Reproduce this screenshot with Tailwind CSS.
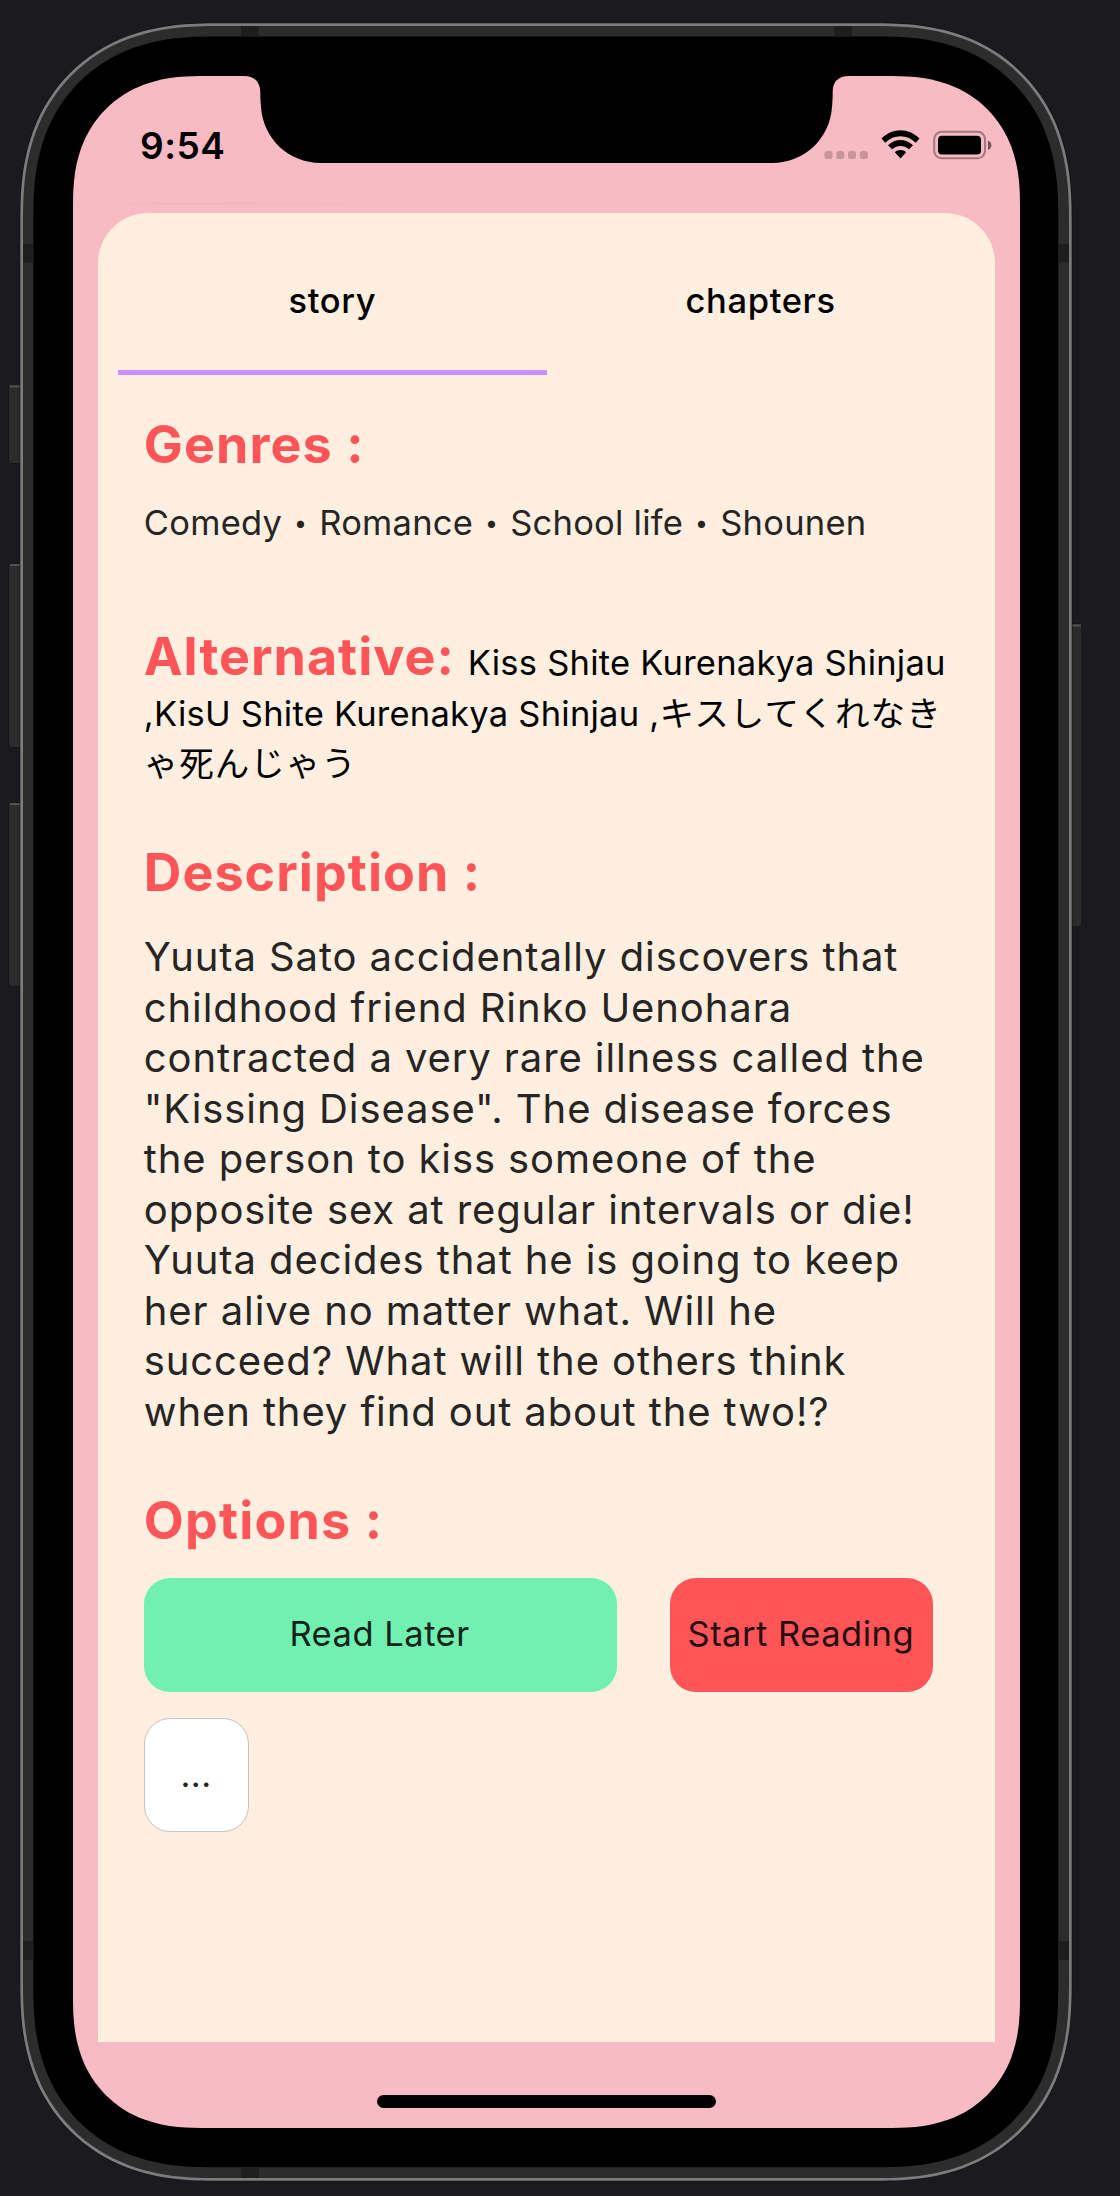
<!DOCTYPE html>
<html lang="en">
<head>
<meta charset="utf-8">
<title>Story details</title>
<script src="https://cdn.jsdelivr.net/npm/@tailwindcss/browser@4"></script>
</head>
<body class="bg-[#1b1a1e]">
<div class="relative w-[1120px] h-[2196px] overflow-hidden font-['Inter','Noto_Sans_CJK_JP',sans-serif] text-[#272523]">

  <!-- Device shell -->
  <svg class="absolute inset-0" width="1120" height="2196" viewBox="0 0 1120 2196" fill="none">
    <defs>
      <linearGradient id="hair" x1="110" x2="420" y1="0" y2="0" gradientUnits="userSpaceOnUse">
        <stop offset="0" stop-color="#e9adb6" stop-opacity="0"/><stop offset=".2" stop-color="#e9adb6" stop-opacity=".6"/><stop offset="1" stop-color="#e9adb6" stop-opacity="0"/>
      </linearGradient>
    </defs>
    <!-- Side buttons -->
    <g fill="#2b2b2b" stroke="#151417" stroke-width="1">
      <rect x="8.500" y="379.500" width="20" height="84" rx="3"/>
      <rect x="8.500" y="563.500" width="20" height="184" rx="3"/>
      <rect x="8.500" y="802.500" width="20" height="184" rx="3"/>
      <rect x="1062" y="623.500" width="20" height="303" rx="3"/>
    </g>
    <path d="M10 386.500H21M10 565H21M10 804H21M1071 625.500H1081" stroke="#525252" stroke-width="2"/>
    <path d="M8 379H20V385H8Z" fill="#1b1a1e"/>
    <g id="shell"></g>
    <!-- Antenna bands -->
    <g fill="#1e1e1e">
      <rect x="241" y="26" width="18" height="10.500"/><rect x="834" y="26" width="18" height="10.500"/>
      <rect x="241" y="2167.300" width="18" height="10.700"/>
      <rect x="23" y="244" width="10.300" height="18.500"/><rect x="1058.300" y="244" width="10.700" height="18.500"/>
      <rect x="23" y="1941" width="10.300" height="19"/><rect x="1058.300" y="1941" width="10.700" height="19"/>
    </g>
    <g id="screen"></g>
    <!-- Notch -->
    <path d="M244 75H849V76C838 76 832.700 82 832.700 92C832.700 98 832.500 101 832 107C830 138 805 163 772 163H321C288 163 263 138 261 107C260.500 101 260.300 98 260.300 92C260.300 82 254 76 244 76Z" fill="#000"/>
    <path d="M110 203.500H420" stroke="url(#hair)" stroke-width="1.500"/>
  </svg>
  <script>
    // Rounded rectangle with continuous corners.
    function squircle(x, y, w, h, r) {
      const k = [1.2, 1.02, 0.84, 0.63149, 0.37282, 0.16906, 0.07491].map(v => v * r);
      const [a, b, c, d, e, f, g] = k;
      const corner = (sx, sy, ox, oy, flip) => {
        const p = (u, v) => (flip ? [ox + sx * v, oy + sy * u] : [ox + sx * u, oy + sy * v]).join(' ');
        return `L${p(0, a)}C${p(0, b)} ${p(0, c)} ${p(g, d)}C${p(f, e)} ${p(e, f)} ${p(d, g)}C${p(c, 0)} ${p(b, 0)} ${p(a, 0)}`;
      };
      return 'M' + x + ' ' + (y + a) + corner(1, 1, x, y) + corner(-1, 1, x + w, y, true) +
        corner(-1, -1, x + w, y + h) + corner(1, -1, x, y + h, true) + 'Z';
    }
    const path = (x1, y1, x2, y2, r, fill) => `<path d="${squircle(x1, y1, x2 - x1, y2 - y1, r)}" fill="${fill}"/>`;
    document.getElementById('shell').innerHTML =
      path(19.5, 22.5, 1072.5, 2181.5, 172, '#121114') +
      path(20.3, 23.3, 1071.7, 2180.7, 171, '#7c7c7c') +
      path(23, 26, 1069, 2178, 168.5, '#2c2c2c') +
      path(33.3, 36.5, 1058.3, 2167.3, 157, '#000');
    document.getElementById('screen').innerHTML = path(73, 76, 1020, 2128, 113, '#f8bbc4');
  </script>

  <!-- Screen content -->
  <div class="relative ml-[73px] pt-[76px] w-[947px] h-[2128px] flex flex-col">
    <header class="h-[137px] shrink-0 flex justify-between pl-[67px] pr-[28px]">
      <span class="mt-[47px] h-[45px] leading-[45px] text-[37px] font-semibold tracking-[0.500px] text-black">9:54</span>
      <svg class="mt-[50px]" width="170" height="40" viewBox="822 126 170 40">
        <g fill="#c6959d"><rect x="824.500" y="151" width="8" height="8" rx="2.500"/><rect x="836.300" y="151" width="8" height="8" rx="2.500"/><rect x="848" y="151" width="8" height="8" rx="2.500"/><rect x="859.800" y="151" width="8" height="8" rx="2.500"/></g>
        <g fill="#000">
          <path d="M881.500 138.500C892.500 127.500 908.500 127.500 919.500 138.500L915.800 142.800C907 134.200 894 134.200 885.200 142.800Z"/>
          <path d="M888 145.300C895.500 138.200 905.500 138.200 913 145.300L909 149.300C904 144.800 897 144.800 892 149.300Z"/>
          <path d="M894.800 152.300C898 149.300 903 149.300 906.200 152.300L900.500 158.500Z"/>
          <rect x="938" y="135.700" width="43" height="18.800" rx="4"/>
        </g>
        <rect x="934.200" y="131.800" width="50.800" height="26.500" rx="7.500" fill="none" stroke="#a1797f" stroke-width="2"/>
        <path d="M988 140.500C992.500 142 992.500 148.500 988 150Z" fill="#6f5458"/>
      </svg>
    </header>

    <main class="ml-[25.300px] w-[896.500px] h-[1829px] shrink-0 rounded-t-[50px] bg-[#ffefe0]">
      <nav class="h-[162px] px-[20px] flex text-[34.500px] font-medium tracking-[0.650px] text-black text-center">
        <div class="flex-1 h-full pt-[62.500px] leading-[50px] border-b-[5px] border-[#c88ff9]">story</div>
        <div class="flex-1 h-full pt-[62.500px] leading-[50px]">chapters</div>
      </nav>

      <div class="pl-[45.500px] whitespace-nowrap">
        <h2 class="pt-[38.500px] leading-[62px] text-[52px] font-bold tracking-[1.100px] text-[#ff5558]">Genres :</h2>
        <p class="mt-[22px] h-[50px] leading-[50px] text-[34.500px] tracking-[0.250px]">Comedy<span class="inline-block w-[37px] text-center text-[23px] leading-none align-[4px]">•</span>Romance<span class="inline-block w-[37px] text-center text-[23px] leading-none align-[4px]">•</span>School life<span class="inline-block w-[37px] text-center text-[23px] leading-none align-[4px]">•</span>Shounen</p>

        <p class="mt-[90.500px] leading-[50.500px] text-[34.500px] tracking-[0.240px] text-black"><span class="inline-block h-[50.500px] align-bottom"><span class="text-[52px] leading-[0] font-bold tracking-[1px] text-[#ff5558]">Alternative:</span> <span class="ml-[3px]">Kiss Shite Kurenakya Shinjau</span></span><br><span class="inline-block h-[50.500px] align-bottom">,KisU Shite Kurenakya Shinjau ,<span class="tracking-[1.200px]">キスしてくれなき</span></span><br><span class="inline-block h-[50.500px] align-bottom tracking-[1px]">ゃ死んじゃう</span></p>

        <h2 class="mt-[52.500px] leading-[62px] text-[52px] font-bold tracking-[1.050px] text-[#ff5558]">Description :</h2>
        <p class="mt-[28px] leading-[50.500px] text-[40px] tracking-[0.900px]">Yuuta Sato accidentally discovers that<br>childhood friend Rinko Uenohara<br>contracted a very rare illness called the<br>"Kissing Disease". The disease forces<br>the person to kiss someone of the<br>opposite sex at regular intervals or die!<br>Yuuta decides that he is going to keep<br>her alive no matter what. Will he<br>succeed? What will the others think<br>when they find out about the two!?</p>

        <h2 class="mt-[52.500px] leading-[62px] text-[52px] font-bold tracking-[1.150px] text-[#ff5558]">Options :</h2>
        <div class="mt-[26px] flex flex-wrap gap-x-[53px] gap-y-[26px] text-[34.500px] tracking-[0.500px]">
          <button class="w-[473.500px] h-[114px] rounded-[26px] bg-[#72f0b1] pb-[2px] pr-[2px] text-[#10241a]">Read Later</button>
          <button class="w-[263px] h-[114px] rounded-[26px] bg-[#ff5558] pb-[2px] pr-[2px] text-[#260d0d]">Start Reading</button>
          <button class="w-[105.500px] h-[114px] rounded-[26px] bg-white border-[1.500px] border-[#c8c2bd] pt-[1px] pr-[1px]">...</button>
        </div>
      </div>
    </main>

    <div class="mt-[53px] mx-auto w-[339px] h-[12.500px] shrink-0 rounded-full bg-black"></div>
  </div>
</div>
</body>
</html>
